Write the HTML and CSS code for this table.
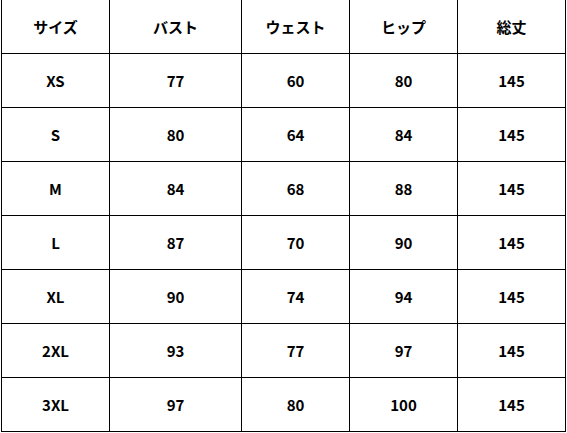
FILE: index.html
```html
<!DOCTYPE html>
<html lang="ja">
<head>
<meta charset="utf-8">
<link rel="stylesheet" href="styles.css">
</head>
<body>
<table class="size-table">
  <colgroup>
    <col class="c-narrow"><col class="c-wide"><col class="c-narrow"><col class="c-narrow"><col class="c-narrow">
  </colgroup>
  <thead>
    <tr><th>サイズ</th><th>バスト</th><th>ウェスト</th><th>ヒップ</th><th>総丈</th></tr>
  </thead>
  <tbody>
    <tr><td>XS</td><td>77</td><td>60</td><td>80</td><td>145</td></tr>
    <tr><td>S</td><td>80</td><td>64</td><td>84</td><td>145</td></tr>
    <tr><td>M</td><td>84</td><td>68</td><td>88</td><td>145</td></tr>
    <tr><td>L</td><td>87</td><td>70</td><td>90</td><td>145</td></tr>
    <tr><td>XL</td><td>90</td><td>74</td><td>94</td><td>145</td></tr>
    <tr><td>2XL</td><td>93</td><td>77</td><td>97</td><td>145</td></tr>
    <tr><td>3XL</td><td>97</td><td>80</td><td>100</td><td>145</td></tr>
  </tbody>
</table>
</body>
</html>
```
FILE: styles.css
```css
html, body {
  margin: 0;
  padding: 0;
  background: #fff;
}
body {
  overflow: hidden;
  width: 567px;
  height: 433px;
}
.size-table {
  border-collapse: collapse;
  table-layout: fixed;
  margin: -1px 0 0 1px;
  width: 565px;
  font-family: "Noto Sans CJK JP", "Noto Sans", sans-serif;
  color: #000;
}
.c-narrow { width: 108px; }
.c-wide { width: 132px; }
.size-table th,
.size-table td {
  border: 1px solid #000;
  height: 53px;
  padding: 0;
  text-align: center;
  vertical-align: middle;
  line-height: 1;
}
.size-table th {
  font-size: 15px;
  font-weight: 700;
}
.size-table td {
  font-size: 15px;
  font-weight: 700;
}
```
